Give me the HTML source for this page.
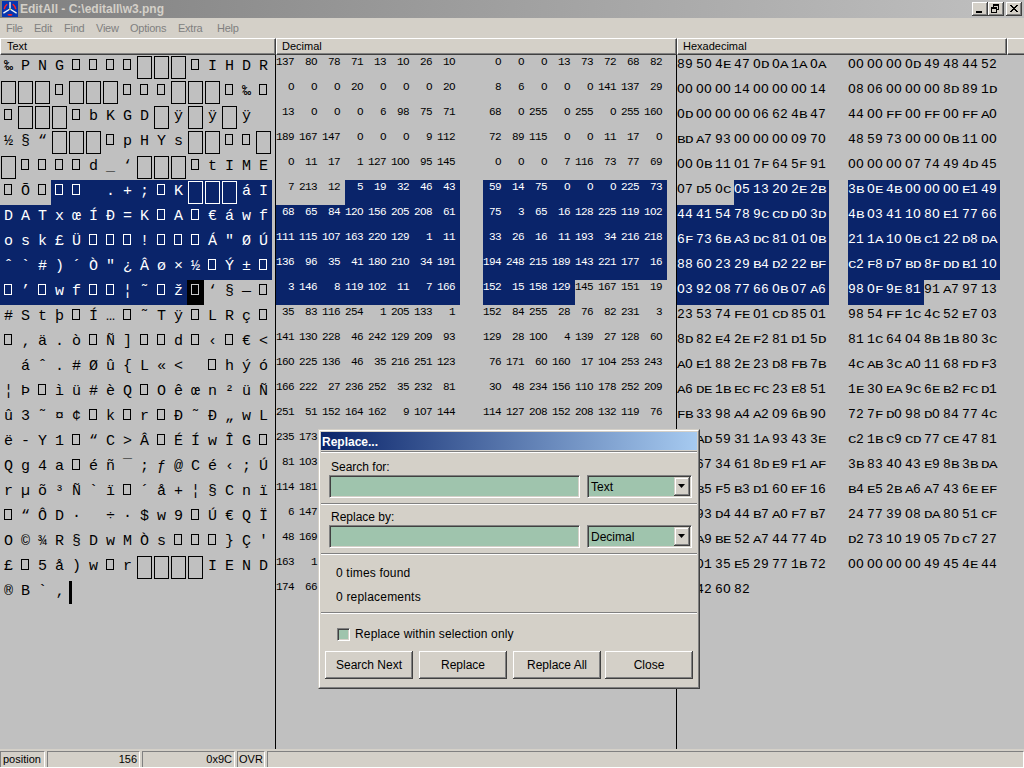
<!DOCTYPE html><html><head><meta charset="utf-8"><style>
*{margin:0;padding:0;box-sizing:border-box}
html,body{width:1024px;height:768px;overflow:hidden;background:#d4d0c8;position:relative;font-family:"Liberation Sans",sans-serif}
div,span{position:absolute}
.tb{left:0;top:0;width:1024px;height:18px;background:linear-gradient(to right,#808080,#c0c0c0)}
.menu{top:18px;height:20px;font-size:11px;letter-spacing:-0.25px;color:#808080;line-height:20px;white-space:pre}
.hdr{top:38px;height:17px;background:#d4d0c8;border-top:1px solid #fff;border-left:1px solid #fff;border-right:1px solid #404040;border-bottom:1px solid #404040;box-shadow:inset -1px -1px 0 #808080;font-size:11px;line-height:15px;padding-left:6px;color:#000}
.panel{top:55px;height:694px;background:#c0c0c0}
.sel{background:#0a246a}
.tc{width:17px;height:25px;font:15px "Liberation Mono",monospace;text-align:center;line-height:23px;color:#000}
.w{color:#fff}
.sb{border:1px solid #000;border-color:#000}
.big{width:15px;height:23px;border:1px solid #000;left:1px;top:1px}
.sm{width:8px;height:11px;border:1px solid #000;left:4px;top:6px}
.dc{width:23px;height:25px;font:11px "Liberation Mono",monospace;letter-spacing:-0.6px;text-align:right;padding-right:5px;line-height:14px;color:#000;white-space:pre}
.hc{width:19px;height:25px;font:13px "Liberation Mono",monospace;line-height:20px;color:#000;white-space:pre;padding-left:0px;letter-spacing:0.2px}
.hc i{font-style:normal;position:relative;font-size:11px;display:inline-block;width:8px;transform:scaleX(1.3);transform-origin:0 0}
.btn{background:#d4d0c8;box-shadow:inset -1px -1px 0 #404040,inset 1px 1px 0 #fff,inset -2px -2px 0 #808080}
.sunk{border:1px solid;border-color:#808080 #fff #fff #808080;box-shadow:inset 1px 1px 0 #404040, inset -1px -1px 0 #d4d0c8;background:#9fc4ad}
.lbl{font-size:12px;color:#000;white-space:pre;line-height:14px}
.groove{height:2px;border-top:1px solid #808080;border-bottom:1px solid #fff}
.stp{top:751px;height:16px;border:1px solid;border-bottom:0;border-color:#808080 #fff #fff #808080;font-size:11px;line-height:14px;padding:0 2px;white-space:pre}
</style></head><body>
<div class="tb"></div>
<div style="left:2px;top:1px;width:16px;height:16px;background:#0636b0"><svg width="16" height="16" style="position:absolute;left:0;top:0">
<path d="M8 1.5V8M8 8L1.8 11.8M8 8L14.2 11.8" stroke="#f4f4f4" stroke-width="1.4" fill="none" stroke-linecap="round"/>
<path d="M4.8 3.6Q2.8 5 2.4 7.6M11.2 3.6Q13.2 5 13.6 7.6" stroke="#ff2020" stroke-width="1.5" fill="none" stroke-linecap="round"/>
<ellipse cx="8" cy="13.8" rx="2.6" ry="0.9" fill="#ff2020"/>
<circle cx="8" cy="8" r="0.9" fill="#b0b020"/></svg></div>
<div style="left:20px;top:2px;font:bold 12px 'Liberation Sans';color:#d4d0c8;line-height:14px;white-space:pre">EditAll - C:\editall\w3.png</div>
<div class="btn" style="left:972px;top:2px;width:16px;height:14px"></div>
<div class="btn" style="left:988px;top:2px;width:16px;height:14px"></div>
<div class="btn" style="left:1006px;top:2px;width:16px;height:14px"></div>
<div style="left:976px;top:11px;width:6px;height:2px;background:#000"></div>
<svg style="position:absolute;left:988px;top:2px" width="16" height="14" shape-rendering="crispEdges"><g fill="#000"><rect x="5" y="2" width="6" height="2"/><rect x="10" y="2" width="1" height="6"/><rect x="9" y="7" width="2" height="1"/><rect x="5" y="2" width="1" height="3"/><rect x="3" y="5" width="6" height="2"/><rect x="3" y="5" width="1" height="6"/><rect x="8" y="5" width="1" height="6"/><rect x="3" y="10" width="6" height="1"/></g></svg>
<svg style="position:absolute;left:1006px;top:2px" width="16" height="14"><path d="M4 3L11 10M11 3L4 10M5 3L12 10M12 3L5 10" stroke="#000" stroke-width="1" fill="none" shape-rendering="crispEdges"/></svg>
<div class="menu" style="left:6px">File</div>
<div class="menu" style="left:34px">Edit</div>
<div class="menu" style="left:64px">Find</div>
<div class="menu" style="left:96px">View</div>
<div class="menu" style="left:130px">Options</div>
<div class="menu" style="left:178px">Extra</div>
<div class="menu" style="left:217px">Help</div>
<div class="hdr" style="left:0;width:276px">Text</div>
<div class="hdr" style="left:276px;width:401px;padding-left:5px">Decimal</div>
<div class="hdr" style="left:677px;width:330px;padding-left:5px">Hexadecimal</div>
<div class="hdr" style="left:1007px;width:20px"></div>
<div class="panel" style="left:0;width:275px"></div>
<div style="left:275px;top:55px;width:1px;height:694px;background:#000"></div>
<div class="panel" style="left:276px;width:400px"></div>
<div style="left:676px;top:55px;width:1px;height:694px;background:#000"></div>
<div class="panel" style="left:677px;width:347px"></div>
<div class="sel" style="left:51px;top:180px;width:221px;height:25px"></div>
<div class="sel" style="left:0px;top:205px;width:272px;height:25px"></div>
<div class="sel" style="left:0px;top:230px;width:272px;height:25px"></div>
<div class="sel" style="left:0px;top:255px;width:272px;height:25px"></div>
<div class="sel" style="left:0px;top:280px;width:187px;height:25px"></div>
<div style="left:187px;top:280px;width:17px;height:25px;background:#000"></div>
<div class="sel" style="left:345px;top:180px;width:115px;height:25px"></div>
<div class="sel" style="left:483px;top:180px;width:184px;height:25px"></div>
<div class="sel" style="left:276px;top:205px;width:184px;height:25px"></div>
<div class="sel" style="left:483px;top:205px;width:184px;height:25px"></div>
<div class="sel" style="left:276px;top:230px;width:184px;height:25px"></div>
<div class="sel" style="left:483px;top:230px;width:184px;height:25px"></div>
<div class="sel" style="left:276px;top:255px;width:184px;height:25px"></div>
<div class="sel" style="left:483px;top:255px;width:184px;height:25px"></div>
<div class="sel" style="left:276px;top:280px;width:184px;height:25px"></div>
<div class="sel" style="left:483px;top:280px;width:92px;height:25px"></div>
<div class="sel" style="left:734px;top:180px;width:95px;height:25px"></div>
<div class="sel" style="left:848px;top:180px;width:152px;height:25px"></div>
<div class="sel" style="left:677px;top:205px;width:152px;height:25px"></div>
<div class="sel" style="left:848px;top:205px;width:152px;height:25px"></div>
<div class="sel" style="left:677px;top:230px;width:152px;height:25px"></div>
<div class="sel" style="left:848px;top:230px;width:152px;height:25px"></div>
<div class="sel" style="left:677px;top:255px;width:152px;height:25px"></div>
<div class="sel" style="left:848px;top:255px;width:152px;height:25px"></div>
<div class="sel" style="left:677px;top:280px;width:152px;height:25px"></div>
<div class="sel" style="left:848px;top:280px;width:76px;height:25px"></div>
<div class="tc" style="left:0px;top:55px;color:#000">‰</div>
<div class="dc" style="left:276px;top:55px;color:#000">137</div>
<div class="hc" style="left:677px;top:55px;color:#000">89</div>
<div class="tc" style="left:17px;top:55px;color:#000">P</div>
<div class="dc" style="left:299px;top:55px;color:#000">8O</div>
<div class="hc" style="left:696px;top:55px;color:#000">5O</div>
<div class="tc" style="left:34px;top:55px;color:#000">N</div>
<div class="dc" style="left:322px;top:55px;color:#000">78</div>
<div class="hc" style="left:715px;top:55px;color:#000">4<i>E</i></div>
<div class="tc" style="left:51px;top:55px;color:#000">G</div>
<div class="dc" style="left:345px;top:55px;color:#000">71</div>
<div class="hc" style="left:734px;top:55px;color:#000">47</div>
<div class="sm" style="left:72px;top:59px;border-color:#000"></div>
<div class="dc" style="left:368px;top:55px;color:#000">13</div>
<div class="hc" style="left:753px;top:55px;color:#000">O<i>D</i></div>
<div class="sm" style="left:89px;top:59px;border-color:#000"></div>
<div class="dc" style="left:391px;top:55px;color:#000">1O</div>
<div class="hc" style="left:772px;top:55px;color:#000">O<i>A</i></div>
<div class="sm" style="left:106px;top:59px;border-color:#000"></div>
<div class="dc" style="left:414px;top:55px;color:#000">26</div>
<div class="hc" style="left:791px;top:55px;color:#000">1<i>A</i></div>
<div class="sm" style="left:123px;top:59px;border-color:#000"></div>
<div class="dc" style="left:437px;top:55px;color:#000">1O</div>
<div class="hc" style="left:810px;top:55px;color:#000">O<i>A</i></div>
<div class="big" style="left:137px;top:56px;border-color:#000"></div>
<div class="dc" style="left:483px;top:55px;color:#000">O</div>
<div class="hc" style="left:848px;top:55px;color:#000">OO</div>
<div class="big" style="left:154px;top:56px;border-color:#000"></div>
<div class="dc" style="left:506px;top:55px;color:#000">O</div>
<div class="hc" style="left:867px;top:55px;color:#000">OO</div>
<div class="big" style="left:171px;top:56px;border-color:#000"></div>
<div class="dc" style="left:529px;top:55px;color:#000">O</div>
<div class="hc" style="left:886px;top:55px;color:#000">OO</div>
<div class="sm" style="left:191px;top:59px;border-color:#000"></div>
<div class="dc" style="left:552px;top:55px;color:#000">13</div>
<div class="hc" style="left:905px;top:55px;color:#000">O<i>D</i></div>
<div class="tc" style="left:204px;top:55px;color:#000">I</div>
<div class="dc" style="left:575px;top:55px;color:#000">73</div>
<div class="hc" style="left:924px;top:55px;color:#000">49</div>
<div class="tc" style="left:221px;top:55px;color:#000">H</div>
<div class="dc" style="left:598px;top:55px;color:#000">72</div>
<div class="hc" style="left:943px;top:55px;color:#000">48</div>
<div class="tc" style="left:238px;top:55px;color:#000">D</div>
<div class="dc" style="left:621px;top:55px;color:#000">68</div>
<div class="hc" style="left:962px;top:55px;color:#000">44</div>
<div class="tc" style="left:255px;top:55px;color:#000">R</div>
<div class="dc" style="left:644px;top:55px;color:#000">82</div>
<div class="hc" style="left:981px;top:55px;color:#000">52</div>
<div class="big" style="left:1px;top:81px;border-color:#000"></div>
<div class="dc" style="left:276px;top:80px;color:#000">O</div>
<div class="hc" style="left:677px;top:80px;color:#000">OO</div>
<div class="big" style="left:18px;top:81px;border-color:#000"></div>
<div class="dc" style="left:299px;top:80px;color:#000">O</div>
<div class="hc" style="left:696px;top:80px;color:#000">OO</div>
<div class="big" style="left:35px;top:81px;border-color:#000"></div>
<div class="dc" style="left:322px;top:80px;color:#000">O</div>
<div class="hc" style="left:715px;top:80px;color:#000">OO</div>
<div class="sm" style="left:55px;top:84px;border-color:#000"></div>
<div class="dc" style="left:345px;top:80px;color:#000">2O</div>
<div class="hc" style="left:734px;top:80px;color:#000">14</div>
<div class="big" style="left:69px;top:81px;border-color:#000"></div>
<div class="dc" style="left:368px;top:80px;color:#000">O</div>
<div class="hc" style="left:753px;top:80px;color:#000">OO</div>
<div class="big" style="left:86px;top:81px;border-color:#000"></div>
<div class="dc" style="left:391px;top:80px;color:#000">O</div>
<div class="hc" style="left:772px;top:80px;color:#000">OO</div>
<div class="big" style="left:103px;top:81px;border-color:#000"></div>
<div class="dc" style="left:414px;top:80px;color:#000">O</div>
<div class="hc" style="left:791px;top:80px;color:#000">OO</div>
<div class="sm" style="left:123px;top:84px;border-color:#000"></div>
<div class="dc" style="left:437px;top:80px;color:#000">2O</div>
<div class="hc" style="left:810px;top:80px;color:#000">14</div>
<div class="sm" style="left:140px;top:84px;border-color:#000"></div>
<div class="dc" style="left:483px;top:80px;color:#000">8</div>
<div class="hc" style="left:848px;top:80px;color:#000">O8</div>
<div class="sm" style="left:157px;top:84px;border-color:#000"></div>
<div class="dc" style="left:506px;top:80px;color:#000">6</div>
<div class="hc" style="left:867px;top:80px;color:#000">O6</div>
<div class="big" style="left:171px;top:81px;border-color:#000"></div>
<div class="dc" style="left:529px;top:80px;color:#000">O</div>
<div class="hc" style="left:886px;top:80px;color:#000">OO</div>
<div class="big" style="left:188px;top:81px;border-color:#000"></div>
<div class="dc" style="left:552px;top:80px;color:#000">O</div>
<div class="hc" style="left:905px;top:80px;color:#000">OO</div>
<div class="big" style="left:205px;top:81px;border-color:#000"></div>
<div class="dc" style="left:575px;top:80px;color:#000">O</div>
<div class="hc" style="left:924px;top:80px;color:#000">OO</div>
<div class="sm" style="left:225px;top:84px;border-color:#000"></div>
<div class="dc" style="left:598px;top:80px;color:#000">141</div>
<div class="hc" style="left:943px;top:80px;color:#000">8<i>D</i></div>
<div class="tc" style="left:238px;top:80px;color:#000">‰</div>
<div class="dc" style="left:621px;top:80px;color:#000">137</div>
<div class="hc" style="left:962px;top:80px;color:#000">89</div>
<div class="sm" style="left:259px;top:84px;border-color:#000"></div>
<div class="dc" style="left:644px;top:80px;color:#000">29</div>
<div class="hc" style="left:981px;top:80px;color:#000">1<i>D</i></div>
<div class="sm" style="left:4px;top:109px;border-color:#000"></div>
<div class="dc" style="left:276px;top:105px;color:#000">13</div>
<div class="hc" style="left:677px;top:105px;color:#000">O<i>D</i></div>
<div class="big" style="left:18px;top:106px;border-color:#000"></div>
<div class="dc" style="left:299px;top:105px;color:#000">O</div>
<div class="hc" style="left:696px;top:105px;color:#000">OO</div>
<div class="big" style="left:35px;top:106px;border-color:#000"></div>
<div class="dc" style="left:322px;top:105px;color:#000">O</div>
<div class="hc" style="left:715px;top:105px;color:#000">OO</div>
<div class="big" style="left:52px;top:106px;border-color:#000"></div>
<div class="dc" style="left:345px;top:105px;color:#000">O</div>
<div class="hc" style="left:734px;top:105px;color:#000">OO</div>
<div class="sm" style="left:72px;top:109px;border-color:#000"></div>
<div class="dc" style="left:368px;top:105px;color:#000">6</div>
<div class="hc" style="left:753px;top:105px;color:#000">O6</div>
<div class="tc" style="left:85px;top:105px;color:#000">b</div>
<div class="dc" style="left:391px;top:105px;color:#000">98</div>
<div class="hc" style="left:772px;top:105px;color:#000">62</div>
<div class="tc" style="left:102px;top:105px;color:#000">K</div>
<div class="dc" style="left:414px;top:105px;color:#000">75</div>
<div class="hc" style="left:791px;top:105px;color:#000">4<i>B</i></div>
<div class="tc" style="left:119px;top:105px;color:#000">G</div>
<div class="dc" style="left:437px;top:105px;color:#000">71</div>
<div class="hc" style="left:810px;top:105px;color:#000">47</div>
<div class="tc" style="left:136px;top:105px;color:#000">D</div>
<div class="dc" style="left:483px;top:105px;color:#000">68</div>
<div class="hc" style="left:848px;top:105px;color:#000">44</div>
<div class="big" style="left:154px;top:106px;border-color:#000"></div>
<div class="dc" style="left:506px;top:105px;color:#000">O</div>
<div class="hc" style="left:867px;top:105px;color:#000">OO</div>
<div class="tc" style="left:170px;top:105px;color:#000">ÿ</div>
<div class="dc" style="left:529px;top:105px;color:#000">255</div>
<div class="hc" style="left:886px;top:105px;color:#000"><i>F</i><i>F</i></div>
<div class="big" style="left:188px;top:106px;border-color:#000"></div>
<div class="dc" style="left:552px;top:105px;color:#000">O</div>
<div class="hc" style="left:905px;top:105px;color:#000">OO</div>
<div class="tc" style="left:204px;top:105px;color:#000">ÿ</div>
<div class="dc" style="left:575px;top:105px;color:#000">255</div>
<div class="hc" style="left:924px;top:105px;color:#000"><i>F</i><i>F</i></div>
<div class="big" style="left:222px;top:106px;border-color:#000"></div>
<div class="dc" style="left:598px;top:105px;color:#000">O</div>
<div class="hc" style="left:943px;top:105px;color:#000">OO</div>
<div class="tc" style="left:238px;top:105px;color:#000">ÿ</div>
<div class="dc" style="left:621px;top:105px;color:#000">255</div>
<div class="hc" style="left:962px;top:105px;color:#000"><i>F</i><i>F</i></div>
<div class="dc" style="left:644px;top:105px;color:#000">16O</div>
<div class="hc" style="left:981px;top:105px;color:#000"><i>A</i>O</div>
<div class="tc" style="left:0px;top:130px;color:#000">½</div>
<div class="dc" style="left:276px;top:130px;color:#000">189</div>
<div class="hc" style="left:677px;top:130px;color:#000"><i>B</i><i>D</i></div>
<div class="tc" style="left:17px;top:130px;color:#000">§</div>
<div class="dc" style="left:299px;top:130px;color:#000">167</div>
<div class="hc" style="left:696px;top:130px;color:#000"><i>A</i>7</div>
<div class="tc" style="left:34px;top:130px;color:#000">“</div>
<div class="dc" style="left:322px;top:130px;color:#000">147</div>
<div class="hc" style="left:715px;top:130px;color:#000">93</div>
<div class="big" style="left:52px;top:131px;border-color:#000"></div>
<div class="dc" style="left:345px;top:130px;color:#000">O</div>
<div class="hc" style="left:734px;top:130px;color:#000">OO</div>
<div class="big" style="left:69px;top:131px;border-color:#000"></div>
<div class="dc" style="left:368px;top:130px;color:#000">O</div>
<div class="hc" style="left:753px;top:130px;color:#000">OO</div>
<div class="big" style="left:86px;top:131px;border-color:#000"></div>
<div class="dc" style="left:391px;top:130px;color:#000">O</div>
<div class="hc" style="left:772px;top:130px;color:#000">OO</div>
<div class="sm" style="left:106px;top:134px;border-color:#000"></div>
<div class="dc" style="left:414px;top:130px;color:#000">9</div>
<div class="hc" style="left:791px;top:130px;color:#000">O9</div>
<div class="tc" style="left:119px;top:130px;color:#000">p</div>
<div class="dc" style="left:437px;top:130px;color:#000">112</div>
<div class="hc" style="left:810px;top:130px;color:#000">7O</div>
<div class="tc" style="left:136px;top:130px;color:#000">H</div>
<div class="dc" style="left:483px;top:130px;color:#000">72</div>
<div class="hc" style="left:848px;top:130px;color:#000">48</div>
<div class="tc" style="left:153px;top:130px;color:#000">Y</div>
<div class="dc" style="left:506px;top:130px;color:#000">89</div>
<div class="hc" style="left:867px;top:130px;color:#000">59</div>
<div class="tc" style="left:170px;top:130px;color:#000">s</div>
<div class="dc" style="left:529px;top:130px;color:#000">115</div>
<div class="hc" style="left:886px;top:130px;color:#000">73</div>
<div class="big" style="left:188px;top:131px;border-color:#000"></div>
<div class="dc" style="left:552px;top:130px;color:#000">O</div>
<div class="hc" style="left:905px;top:130px;color:#000">OO</div>
<div class="big" style="left:205px;top:131px;border-color:#000"></div>
<div class="dc" style="left:575px;top:130px;color:#000">O</div>
<div class="hc" style="left:924px;top:130px;color:#000">OO</div>
<div class="sm" style="left:225px;top:134px;border-color:#000"></div>
<div class="dc" style="left:598px;top:130px;color:#000">11</div>
<div class="hc" style="left:943px;top:130px;color:#000">O<i>B</i></div>
<div class="sm" style="left:242px;top:134px;border-color:#000"></div>
<div class="dc" style="left:621px;top:130px;color:#000">17</div>
<div class="hc" style="left:962px;top:130px;color:#000">11</div>
<div class="big" style="left:256px;top:131px;border-color:#000"></div>
<div class="dc" style="left:644px;top:130px;color:#000">O</div>
<div class="hc" style="left:981px;top:130px;color:#000">OO</div>
<div class="big" style="left:1px;top:156px;border-color:#000"></div>
<div class="dc" style="left:276px;top:155px;color:#000">O</div>
<div class="hc" style="left:677px;top:155px;color:#000">OO</div>
<div class="sm" style="left:21px;top:159px;border-color:#000"></div>
<div class="dc" style="left:299px;top:155px;color:#000">11</div>
<div class="hc" style="left:696px;top:155px;color:#000">O<i>B</i></div>
<div class="sm" style="left:38px;top:159px;border-color:#000"></div>
<div class="dc" style="left:322px;top:155px;color:#000">17</div>
<div class="hc" style="left:715px;top:155px;color:#000">11</div>
<div class="sm" style="left:55px;top:159px;border-color:#000"></div>
<div class="dc" style="left:345px;top:155px;color:#000">1</div>
<div class="hc" style="left:734px;top:155px;color:#000">O1</div>
<div class="sm" style="left:72px;top:159px;border-color:#000"></div>
<div class="dc" style="left:368px;top:155px;color:#000">127</div>
<div class="hc" style="left:753px;top:155px;color:#000">7<i>F</i></div>
<div class="tc" style="left:85px;top:155px;color:#000">d</div>
<div class="dc" style="left:391px;top:155px;color:#000">1OO</div>
<div class="hc" style="left:772px;top:155px;color:#000">64</div>
<div class="tc" style="left:102px;top:155px;color:#000">_</div>
<div class="dc" style="left:414px;top:155px;color:#000">95</div>
<div class="hc" style="left:791px;top:155px;color:#000">5<i>F</i></div>
<div class="tc" style="left:119px;top:155px;color:#000">‘</div>
<div class="dc" style="left:437px;top:155px;color:#000">145</div>
<div class="hc" style="left:810px;top:155px;color:#000">91</div>
<div class="big" style="left:137px;top:156px;border-color:#000"></div>
<div class="dc" style="left:483px;top:155px;color:#000">O</div>
<div class="hc" style="left:848px;top:155px;color:#000">OO</div>
<div class="big" style="left:154px;top:156px;border-color:#000"></div>
<div class="dc" style="left:506px;top:155px;color:#000">O</div>
<div class="hc" style="left:867px;top:155px;color:#000">OO</div>
<div class="big" style="left:171px;top:156px;border-color:#000"></div>
<div class="dc" style="left:529px;top:155px;color:#000">O</div>
<div class="hc" style="left:886px;top:155px;color:#000">OO</div>
<div class="sm" style="left:191px;top:159px;border-color:#000"></div>
<div class="dc" style="left:552px;top:155px;color:#000">7</div>
<div class="hc" style="left:905px;top:155px;color:#000">O7</div>
<div class="tc" style="left:204px;top:155px;color:#000">t</div>
<div class="dc" style="left:575px;top:155px;color:#000">116</div>
<div class="hc" style="left:924px;top:155px;color:#000">74</div>
<div class="tc" style="left:221px;top:155px;color:#000">I</div>
<div class="dc" style="left:598px;top:155px;color:#000">73</div>
<div class="hc" style="left:943px;top:155px;color:#000">49</div>
<div class="tc" style="left:238px;top:155px;color:#000">M</div>
<div class="dc" style="left:621px;top:155px;color:#000">77</div>
<div class="hc" style="left:962px;top:155px;color:#000">4<i>D</i></div>
<div class="tc" style="left:255px;top:155px;color:#000">E</div>
<div class="dc" style="left:644px;top:155px;color:#000">69</div>
<div class="hc" style="left:981px;top:155px;color:#000">45</div>
<div class="sm" style="left:4px;top:184px;border-color:#000"></div>
<div class="dc" style="left:276px;top:180px;color:#000">7</div>
<div class="hc" style="left:677px;top:180px;color:#000">O7</div>
<div class="tc" style="left:17px;top:180px;color:#000">Õ</div>
<div class="dc" style="left:299px;top:180px;color:#000">213</div>
<div class="hc" style="left:696px;top:180px;color:#000"><i>D</i>5</div>
<div class="sm" style="left:38px;top:184px;border-color:#000"></div>
<div class="dc" style="left:322px;top:180px;color:#000">12</div>
<div class="hc" style="left:715px;top:180px;color:#000">O<i>C</i></div>
<div class="sm" style="left:55px;top:184px;border-color:#fff"></div>
<div class="dc" style="left:345px;top:180px;color:#fff">5</div>
<div class="hc" style="left:734px;top:180px;color:#fff">O5</div>
<div class="sm" style="left:72px;top:184px;border-color:#fff"></div>
<div class="dc" style="left:368px;top:180px;color:#fff">19</div>
<div class="hc" style="left:753px;top:180px;color:#fff">13</div>
<div class="tc" style="left:85px;top:180px;color:#fff"> </div>
<div class="dc" style="left:391px;top:180px;color:#fff">32</div>
<div class="hc" style="left:772px;top:180px;color:#fff">2O</div>
<div class="tc" style="left:102px;top:180px;color:#fff">.</div>
<div class="dc" style="left:414px;top:180px;color:#fff">46</div>
<div class="hc" style="left:791px;top:180px;color:#fff">2<i>E</i></div>
<div class="tc" style="left:119px;top:180px;color:#fff">+</div>
<div class="dc" style="left:437px;top:180px;color:#fff">43</div>
<div class="hc" style="left:810px;top:180px;color:#fff">2<i>B</i></div>
<div class="tc" style="left:136px;top:180px;color:#fff">;</div>
<div class="dc" style="left:483px;top:180px;color:#fff">59</div>
<div class="hc" style="left:848px;top:180px;color:#fff">3<i>B</i></div>
<div class="sm" style="left:157px;top:184px;border-color:#fff"></div>
<div class="dc" style="left:506px;top:180px;color:#fff">14</div>
<div class="hc" style="left:867px;top:180px;color:#fff">O<i>E</i></div>
<div class="tc" style="left:170px;top:180px;color:#fff">K</div>
<div class="dc" style="left:529px;top:180px;color:#fff">75</div>
<div class="hc" style="left:886px;top:180px;color:#fff">4<i>B</i></div>
<div class="big" style="left:188px;top:181px;border-color:#fff"></div>
<div class="dc" style="left:552px;top:180px;color:#fff">O</div>
<div class="hc" style="left:905px;top:180px;color:#fff">OO</div>
<div class="big" style="left:205px;top:181px;border-color:#fff"></div>
<div class="dc" style="left:575px;top:180px;color:#fff">O</div>
<div class="hc" style="left:924px;top:180px;color:#fff">OO</div>
<div class="big" style="left:222px;top:181px;border-color:#fff"></div>
<div class="dc" style="left:598px;top:180px;color:#fff">O</div>
<div class="hc" style="left:943px;top:180px;color:#fff">OO</div>
<div class="tc" style="left:238px;top:180px;color:#fff">á</div>
<div class="dc" style="left:621px;top:180px;color:#fff">225</div>
<div class="hc" style="left:962px;top:180px;color:#fff"><i>E</i>1</div>
<div class="tc" style="left:255px;top:180px;color:#fff">I</div>
<div class="dc" style="left:644px;top:180px;color:#fff">73</div>
<div class="hc" style="left:981px;top:180px;color:#fff">49</div>
<div class="tc" style="left:0px;top:205px;color:#fff">D</div>
<div class="dc" style="left:276px;top:205px;color:#fff">68</div>
<div class="hc" style="left:677px;top:205px;color:#fff">44</div>
<div class="tc" style="left:17px;top:205px;color:#fff">A</div>
<div class="dc" style="left:299px;top:205px;color:#fff">65</div>
<div class="hc" style="left:696px;top:205px;color:#fff">41</div>
<div class="tc" style="left:34px;top:205px;color:#fff">T</div>
<div class="dc" style="left:322px;top:205px;color:#fff">84</div>
<div class="hc" style="left:715px;top:205px;color:#fff">54</div>
<div class="tc" style="left:51px;top:205px;color:#fff">x</div>
<div class="dc" style="left:345px;top:205px;color:#fff">12O</div>
<div class="hc" style="left:734px;top:205px;color:#fff">78</div>
<div class="tc" style="left:68px;top:205px;color:#fff">œ</div>
<div class="dc" style="left:368px;top:205px;color:#fff">156</div>
<div class="hc" style="left:753px;top:205px;color:#fff">9<i>C</i></div>
<div class="tc" style="left:85px;top:205px;color:#fff">Í</div>
<div class="dc" style="left:391px;top:205px;color:#fff">2O5</div>
<div class="hc" style="left:772px;top:205px;color:#fff"><i>C</i><i>D</i></div>
<div class="tc" style="left:102px;top:205px;color:#fff">Ð</div>
<div class="dc" style="left:414px;top:205px;color:#fff">2O8</div>
<div class="hc" style="left:791px;top:205px;color:#fff"><i>D</i>O</div>
<div class="tc" style="left:119px;top:205px;color:#fff">=</div>
<div class="dc" style="left:437px;top:205px;color:#fff">61</div>
<div class="hc" style="left:810px;top:205px;color:#fff">3<i>D</i></div>
<div class="tc" style="left:136px;top:205px;color:#fff">K</div>
<div class="dc" style="left:483px;top:205px;color:#fff">75</div>
<div class="hc" style="left:848px;top:205px;color:#fff">4<i>B</i></div>
<div class="sm" style="left:157px;top:209px;border-color:#fff"></div>
<div class="dc" style="left:506px;top:205px;color:#fff">3</div>
<div class="hc" style="left:867px;top:205px;color:#fff">O3</div>
<div class="tc" style="left:170px;top:205px;color:#fff">A</div>
<div class="dc" style="left:529px;top:205px;color:#fff">65</div>
<div class="hc" style="left:886px;top:205px;color:#fff">41</div>
<div class="sm" style="left:191px;top:209px;border-color:#fff"></div>
<div class="dc" style="left:552px;top:205px;color:#fff">16</div>
<div class="hc" style="left:905px;top:205px;color:#fff">1O</div>
<div class="tc" style="left:204px;top:205px;color:#fff">€</div>
<div class="dc" style="left:575px;top:205px;color:#fff">128</div>
<div class="hc" style="left:924px;top:205px;color:#fff">8O</div>
<div class="tc" style="left:221px;top:205px;color:#fff">á</div>
<div class="dc" style="left:598px;top:205px;color:#fff">225</div>
<div class="hc" style="left:943px;top:205px;color:#fff"><i>E</i>1</div>
<div class="tc" style="left:238px;top:205px;color:#fff">w</div>
<div class="dc" style="left:621px;top:205px;color:#fff">119</div>
<div class="hc" style="left:962px;top:205px;color:#fff">77</div>
<div class="tc" style="left:255px;top:205px;color:#fff">f</div>
<div class="dc" style="left:644px;top:205px;color:#fff">1O2</div>
<div class="hc" style="left:981px;top:205px;color:#fff">66</div>
<div class="tc" style="left:0px;top:230px;color:#fff">o</div>
<div class="dc" style="left:276px;top:230px;color:#fff">111</div>
<div class="hc" style="left:677px;top:230px;color:#fff">6<i>F</i></div>
<div class="tc" style="left:17px;top:230px;color:#fff">s</div>
<div class="dc" style="left:299px;top:230px;color:#fff">115</div>
<div class="hc" style="left:696px;top:230px;color:#fff">73</div>
<div class="tc" style="left:34px;top:230px;color:#fff">k</div>
<div class="dc" style="left:322px;top:230px;color:#fff">1O7</div>
<div class="hc" style="left:715px;top:230px;color:#fff">6<i>B</i></div>
<div class="tc" style="left:51px;top:230px;color:#fff">£</div>
<div class="dc" style="left:345px;top:230px;color:#fff">163</div>
<div class="hc" style="left:734px;top:230px;color:#fff"><i>A</i>3</div>
<div class="tc" style="left:68px;top:230px;color:#fff">Ü</div>
<div class="dc" style="left:368px;top:230px;color:#fff">22O</div>
<div class="hc" style="left:753px;top:230px;color:#fff"><i>D</i><i>C</i></div>
<div class="sm" style="left:89px;top:234px;border-color:#fff"></div>
<div class="dc" style="left:391px;top:230px;color:#fff">129</div>
<div class="hc" style="left:772px;top:230px;color:#fff">81</div>
<div class="sm" style="left:106px;top:234px;border-color:#fff"></div>
<div class="dc" style="left:414px;top:230px;color:#fff">1</div>
<div class="hc" style="left:791px;top:230px;color:#fff">O1</div>
<div class="sm" style="left:123px;top:234px;border-color:#fff"></div>
<div class="dc" style="left:437px;top:230px;color:#fff">11</div>
<div class="hc" style="left:810px;top:230px;color:#fff">O<i>B</i></div>
<div class="tc" style="left:136px;top:230px;color:#fff">!</div>
<div class="dc" style="left:483px;top:230px;color:#fff">33</div>
<div class="hc" style="left:848px;top:230px;color:#fff">21</div>
<div class="sm" style="left:157px;top:234px;border-color:#fff"></div>
<div class="dc" style="left:506px;top:230px;color:#fff">26</div>
<div class="hc" style="left:867px;top:230px;color:#fff">1<i>A</i></div>
<div class="sm" style="left:174px;top:234px;border-color:#fff"></div>
<div class="dc" style="left:529px;top:230px;color:#fff">16</div>
<div class="hc" style="left:886px;top:230px;color:#fff">1O</div>
<div class="sm" style="left:191px;top:234px;border-color:#fff"></div>
<div class="dc" style="left:552px;top:230px;color:#fff">11</div>
<div class="hc" style="left:905px;top:230px;color:#fff">O<i>B</i></div>
<div class="tc" style="left:204px;top:230px;color:#fff">Á</div>
<div class="dc" style="left:575px;top:230px;color:#fff">193</div>
<div class="hc" style="left:924px;top:230px;color:#fff"><i>C</i>1</div>
<div class="tc" style="left:221px;top:230px;color:#fff">&quot;</div>
<div class="dc" style="left:598px;top:230px;color:#fff">34</div>
<div class="hc" style="left:943px;top:230px;color:#fff">22</div>
<div class="tc" style="left:238px;top:230px;color:#fff">Ø</div>
<div class="dc" style="left:621px;top:230px;color:#fff">216</div>
<div class="hc" style="left:962px;top:230px;color:#fff"><i>D</i>8</div>
<div class="tc" style="left:255px;top:230px;color:#fff">Ú</div>
<div class="dc" style="left:644px;top:230px;color:#fff">218</div>
<div class="hc" style="left:981px;top:230px;color:#fff"><i>D</i><i>A</i></div>
<div class="tc" style="left:0px;top:255px;color:#fff">ˆ</div>
<div class="dc" style="left:276px;top:255px;color:#fff">136</div>
<div class="hc" style="left:677px;top:255px;color:#fff">88</div>
<div class="tc" style="left:17px;top:255px;color:#fff">`</div>
<div class="dc" style="left:299px;top:255px;color:#fff">96</div>
<div class="hc" style="left:696px;top:255px;color:#fff">6O</div>
<div class="tc" style="left:34px;top:255px;color:#fff">#</div>
<div class="dc" style="left:322px;top:255px;color:#fff">35</div>
<div class="hc" style="left:715px;top:255px;color:#fff">23</div>
<div class="tc" style="left:51px;top:255px;color:#fff">)</div>
<div class="dc" style="left:345px;top:255px;color:#fff">41</div>
<div class="hc" style="left:734px;top:255px;color:#fff">29</div>
<div class="tc" style="left:68px;top:255px;color:#fff">´</div>
<div class="dc" style="left:368px;top:255px;color:#fff">18O</div>
<div class="hc" style="left:753px;top:255px;color:#fff"><i>B</i>4</div>
<div class="tc" style="left:85px;top:255px;color:#fff">Ò</div>
<div class="dc" style="left:391px;top:255px;color:#fff">21O</div>
<div class="hc" style="left:772px;top:255px;color:#fff"><i>D</i>2</div>
<div class="tc" style="left:102px;top:255px;color:#fff">&quot;</div>
<div class="dc" style="left:414px;top:255px;color:#fff">34</div>
<div class="hc" style="left:791px;top:255px;color:#fff">22</div>
<div class="tc" style="left:119px;top:255px;color:#fff">¿</div>
<div class="dc" style="left:437px;top:255px;color:#fff">191</div>
<div class="hc" style="left:810px;top:255px;color:#fff"><i>B</i><i>F</i></div>
<div class="tc" style="left:136px;top:255px;color:#fff">Â</div>
<div class="dc" style="left:483px;top:255px;color:#fff">194</div>
<div class="hc" style="left:848px;top:255px;color:#fff"><i>C</i>2</div>
<div class="tc" style="left:153px;top:255px;color:#fff">ø</div>
<div class="dc" style="left:506px;top:255px;color:#fff">248</div>
<div class="hc" style="left:867px;top:255px;color:#fff"><i>F</i>8</div>
<div class="tc" style="left:170px;top:255px;color:#fff">×</div>
<div class="dc" style="left:529px;top:255px;color:#fff">215</div>
<div class="hc" style="left:886px;top:255px;color:#fff"><i>D</i>7</div>
<div class="tc" style="left:187px;top:255px;color:#fff">½</div>
<div class="dc" style="left:552px;top:255px;color:#fff">189</div>
<div class="hc" style="left:905px;top:255px;color:#fff"><i>B</i><i>D</i></div>
<div class="sm" style="left:208px;top:259px;border-color:#fff"></div>
<div class="dc" style="left:575px;top:255px;color:#fff">143</div>
<div class="hc" style="left:924px;top:255px;color:#fff">8<i>F</i></div>
<div class="tc" style="left:221px;top:255px;color:#fff">Ý</div>
<div class="dc" style="left:598px;top:255px;color:#fff">221</div>
<div class="hc" style="left:943px;top:255px;color:#fff"><i>D</i><i>D</i></div>
<div class="tc" style="left:238px;top:255px;color:#fff">±</div>
<div class="dc" style="left:621px;top:255px;color:#fff">177</div>
<div class="hc" style="left:962px;top:255px;color:#fff"><i>B</i>1</div>
<div class="sm" style="left:259px;top:259px;border-color:#fff"></div>
<div class="dc" style="left:644px;top:255px;color:#fff">16</div>
<div class="hc" style="left:981px;top:255px;color:#fff">1O</div>
<div class="sm" style="left:4px;top:284px;border-color:#fff"></div>
<div class="dc" style="left:276px;top:280px;color:#fff">3</div>
<div class="hc" style="left:677px;top:280px;color:#fff">O3</div>
<div class="tc" style="left:17px;top:280px;color:#fff">’</div>
<div class="dc" style="left:299px;top:280px;color:#fff">146</div>
<div class="hc" style="left:696px;top:280px;color:#fff">92</div>
<div class="sm" style="left:38px;top:284px;border-color:#fff"></div>
<div class="dc" style="left:322px;top:280px;color:#fff">8</div>
<div class="hc" style="left:715px;top:280px;color:#fff">O8</div>
<div class="tc" style="left:51px;top:280px;color:#fff">w</div>
<div class="dc" style="left:345px;top:280px;color:#fff">119</div>
<div class="hc" style="left:734px;top:280px;color:#fff">77</div>
<div class="tc" style="left:68px;top:280px;color:#fff">f</div>
<div class="dc" style="left:368px;top:280px;color:#fff">1O2</div>
<div class="hc" style="left:753px;top:280px;color:#fff">66</div>
<div class="sm" style="left:89px;top:284px;border-color:#fff"></div>
<div class="dc" style="left:391px;top:280px;color:#fff">11</div>
<div class="hc" style="left:772px;top:280px;color:#fff">O<i>B</i></div>
<div class="sm" style="left:106px;top:284px;border-color:#fff"></div>
<div class="dc" style="left:414px;top:280px;color:#fff">7</div>
<div class="hc" style="left:791px;top:280px;color:#fff">O7</div>
<div class="tc" style="left:119px;top:280px;color:#fff">¦</div>
<div class="dc" style="left:437px;top:280px;color:#fff">166</div>
<div class="hc" style="left:810px;top:280px;color:#fff"><i>A</i>6</div>
<div class="tc" style="left:136px;top:280px;color:#fff">˜</div>
<div class="dc" style="left:483px;top:280px;color:#fff">152</div>
<div class="hc" style="left:848px;top:280px;color:#fff">98</div>
<div class="sm" style="left:157px;top:284px;border-color:#fff"></div>
<div class="dc" style="left:506px;top:280px;color:#fff">15</div>
<div class="hc" style="left:867px;top:280px;color:#fff">O<i>F</i></div>
<div class="tc" style="left:170px;top:280px;color:#fff">ž</div>
<div class="dc" style="left:529px;top:280px;color:#fff">158</div>
<div class="hc" style="left:886px;top:280px;color:#fff">9<i>E</i></div>
<div class="sm" style="left:191px;top:284px;border-color:#c8c8c8"></div>
<div class="dc" style="left:552px;top:280px;color:#fff">129</div>
<div class="hc" style="left:905px;top:280px;color:#fff">81</div>
<div class="tc" style="left:204px;top:280px;color:#000">‘</div>
<div class="dc" style="left:575px;top:280px;color:#000">145</div>
<div class="hc" style="left:924px;top:280px;color:#000">91</div>
<div class="tc" style="left:221px;top:280px;color:#000">§</div>
<div class="dc" style="left:598px;top:280px;color:#000">167</div>
<div class="hc" style="left:943px;top:280px;color:#000"><i>A</i>7</div>
<div class="tc" style="left:238px;top:280px;color:#000">—</div>
<div class="dc" style="left:621px;top:280px;color:#000">151</div>
<div class="hc" style="left:962px;top:280px;color:#000">97</div>
<div class="sm" style="left:259px;top:284px;border-color:#000"></div>
<div class="dc" style="left:644px;top:280px;color:#000">19</div>
<div class="hc" style="left:981px;top:280px;color:#000">13</div>
<div class="tc" style="left:0px;top:305px;color:#000">#</div>
<div class="dc" style="left:276px;top:305px;color:#000">35</div>
<div class="hc" style="left:677px;top:305px;color:#000">23</div>
<div class="tc" style="left:17px;top:305px;color:#000">S</div>
<div class="dc" style="left:299px;top:305px;color:#000">83</div>
<div class="hc" style="left:696px;top:305px;color:#000">53</div>
<div class="tc" style="left:34px;top:305px;color:#000">t</div>
<div class="dc" style="left:322px;top:305px;color:#000">116</div>
<div class="hc" style="left:715px;top:305px;color:#000">74</div>
<div class="tc" style="left:51px;top:305px;color:#000">þ</div>
<div class="dc" style="left:345px;top:305px;color:#000">254</div>
<div class="hc" style="left:734px;top:305px;color:#000"><i>F</i><i>E</i></div>
<div class="sm" style="left:72px;top:309px;border-color:#000"></div>
<div class="dc" style="left:368px;top:305px;color:#000">1</div>
<div class="hc" style="left:753px;top:305px;color:#000">O1</div>
<div class="tc" style="left:85px;top:305px;color:#000">Í</div>
<div class="dc" style="left:391px;top:305px;color:#000">2O5</div>
<div class="hc" style="left:772px;top:305px;color:#000"><i>C</i><i>D</i></div>
<div class="tc" style="left:102px;top:305px;color:#000">…</div>
<div class="dc" style="left:414px;top:305px;color:#000">133</div>
<div class="hc" style="left:791px;top:305px;color:#000">85</div>
<div class="sm" style="left:123px;top:309px;border-color:#000"></div>
<div class="dc" style="left:437px;top:305px;color:#000">1</div>
<div class="hc" style="left:810px;top:305px;color:#000">O1</div>
<div class="tc" style="left:136px;top:305px;color:#000">˜</div>
<div class="dc" style="left:483px;top:305px;color:#000">152</div>
<div class="hc" style="left:848px;top:305px;color:#000">98</div>
<div class="tc" style="left:153px;top:305px;color:#000">T</div>
<div class="dc" style="left:506px;top:305px;color:#000">84</div>
<div class="hc" style="left:867px;top:305px;color:#000">54</div>
<div class="tc" style="left:170px;top:305px;color:#000">ÿ</div>
<div class="dc" style="left:529px;top:305px;color:#000">255</div>
<div class="hc" style="left:886px;top:305px;color:#000"><i>F</i><i>F</i></div>
<div class="sm" style="left:191px;top:309px;border-color:#000"></div>
<div class="dc" style="left:552px;top:305px;color:#000">28</div>
<div class="hc" style="left:905px;top:305px;color:#000">1<i>C</i></div>
<div class="tc" style="left:204px;top:305px;color:#000">L</div>
<div class="dc" style="left:575px;top:305px;color:#000">76</div>
<div class="hc" style="left:924px;top:305px;color:#000">4<i>C</i></div>
<div class="tc" style="left:221px;top:305px;color:#000">R</div>
<div class="dc" style="left:598px;top:305px;color:#000">82</div>
<div class="hc" style="left:943px;top:305px;color:#000">52</div>
<div class="tc" style="left:238px;top:305px;color:#000">ç</div>
<div class="dc" style="left:621px;top:305px;color:#000">231</div>
<div class="hc" style="left:962px;top:305px;color:#000"><i>E</i>7</div>
<div class="sm" style="left:259px;top:309px;border-color:#000"></div>
<div class="dc" style="left:644px;top:305px;color:#000">3</div>
<div class="hc" style="left:981px;top:305px;color:#000">O3</div>
<div class="sm" style="left:4px;top:334px;border-color:#000"></div>
<div class="dc" style="left:276px;top:330px;color:#000">141</div>
<div class="hc" style="left:677px;top:330px;color:#000">8<i>D</i></div>
<div class="tc" style="left:17px;top:330px;color:#000">‚</div>
<div class="dc" style="left:299px;top:330px;color:#000">13O</div>
<div class="hc" style="left:696px;top:330px;color:#000">82</div>
<div class="tc" style="left:34px;top:330px;color:#000">ä</div>
<div class="dc" style="left:322px;top:330px;color:#000">228</div>
<div class="hc" style="left:715px;top:330px;color:#000"><i>E</i>4</div>
<div class="tc" style="left:51px;top:330px;color:#000">.</div>
<div class="dc" style="left:345px;top:330px;color:#000">46</div>
<div class="hc" style="left:734px;top:330px;color:#000">2<i>E</i></div>
<div class="tc" style="left:68px;top:330px;color:#000">ò</div>
<div class="dc" style="left:368px;top:330px;color:#000">242</div>
<div class="hc" style="left:753px;top:330px;color:#000"><i>F</i>2</div>
<div class="sm" style="left:89px;top:334px;border-color:#000"></div>
<div class="dc" style="left:391px;top:330px;color:#000">129</div>
<div class="hc" style="left:772px;top:330px;color:#000">81</div>
<div class="tc" style="left:102px;top:330px;color:#000">Ñ</div>
<div class="dc" style="left:414px;top:330px;color:#000">2O9</div>
<div class="hc" style="left:791px;top:330px;color:#000"><i>D</i>1</div>
<div class="tc" style="left:119px;top:330px;color:#000">]</div>
<div class="dc" style="left:437px;top:330px;color:#000">93</div>
<div class="hc" style="left:810px;top:330px;color:#000">5<i>D</i></div>
<div class="sm" style="left:140px;top:334px;border-color:#000"></div>
<div class="dc" style="left:483px;top:330px;color:#000">129</div>
<div class="hc" style="left:848px;top:330px;color:#000">81</div>
<div class="sm" style="left:157px;top:334px;border-color:#000"></div>
<div class="dc" style="left:506px;top:330px;color:#000">28</div>
<div class="hc" style="left:867px;top:330px;color:#000">1<i>C</i></div>
<div class="tc" style="left:170px;top:330px;color:#000">d</div>
<div class="dc" style="left:529px;top:330px;color:#000">1OO</div>
<div class="hc" style="left:886px;top:330px;color:#000">64</div>
<div class="sm" style="left:191px;top:334px;border-color:#000"></div>
<div class="dc" style="left:552px;top:330px;color:#000">4</div>
<div class="hc" style="left:905px;top:330px;color:#000">O4</div>
<div class="tc" style="left:204px;top:330px;color:#000">‹</div>
<div class="dc" style="left:575px;top:330px;color:#000">139</div>
<div class="hc" style="left:924px;top:330px;color:#000">8<i>B</i></div>
<div class="sm" style="left:225px;top:334px;border-color:#000"></div>
<div class="dc" style="left:598px;top:330px;color:#000">27</div>
<div class="hc" style="left:943px;top:330px;color:#000">1<i>B</i></div>
<div class="tc" style="left:238px;top:330px;color:#000">€</div>
<div class="dc" style="left:621px;top:330px;color:#000">128</div>
<div class="hc" style="left:962px;top:330px;color:#000">8O</div>
<div class="tc" style="left:255px;top:330px;color:#000">&lt;</div>
<div class="dc" style="left:644px;top:330px;color:#000">6O</div>
<div class="hc" style="left:981px;top:330px;color:#000">3<i>C</i></div>
<div class="dc" style="left:276px;top:355px;color:#000">16O</div>
<div class="hc" style="left:677px;top:355px;color:#000"><i>A</i>O</div>
<div class="tc" style="left:17px;top:355px;color:#000">á</div>
<div class="dc" style="left:299px;top:355px;color:#000">225</div>
<div class="hc" style="left:696px;top:355px;color:#000"><i>E</i>1</div>
<div class="tc" style="left:34px;top:355px;color:#000">ˆ</div>
<div class="dc" style="left:322px;top:355px;color:#000">136</div>
<div class="hc" style="left:715px;top:355px;color:#000">88</div>
<div class="tc" style="left:51px;top:355px;color:#000">.</div>
<div class="dc" style="left:345px;top:355px;color:#000">46</div>
<div class="hc" style="left:734px;top:355px;color:#000">2<i>E</i></div>
<div class="tc" style="left:68px;top:355px;color:#000">#</div>
<div class="dc" style="left:368px;top:355px;color:#000">35</div>
<div class="hc" style="left:753px;top:355px;color:#000">23</div>
<div class="tc" style="left:85px;top:355px;color:#000">Ø</div>
<div class="dc" style="left:391px;top:355px;color:#000">216</div>
<div class="hc" style="left:772px;top:355px;color:#000"><i>D</i>8</div>
<div class="tc" style="left:102px;top:355px;color:#000">û</div>
<div class="dc" style="left:414px;top:355px;color:#000">251</div>
<div class="hc" style="left:791px;top:355px;color:#000"><i>F</i><i>B</i></div>
<div class="tc" style="left:119px;top:355px;color:#000">{</div>
<div class="dc" style="left:437px;top:355px;color:#000">123</div>
<div class="hc" style="left:810px;top:355px;color:#000">7<i>B</i></div>
<div class="tc" style="left:136px;top:355px;color:#000">L</div>
<div class="dc" style="left:483px;top:355px;color:#000">76</div>
<div class="hc" style="left:848px;top:355px;color:#000">4<i>C</i></div>
<div class="tc" style="left:153px;top:355px;color:#000">«</div>
<div class="dc" style="left:506px;top:355px;color:#000">171</div>
<div class="hc" style="left:867px;top:355px;color:#000"><i>A</i><i>B</i></div>
<div class="tc" style="left:170px;top:355px;color:#000">&lt;</div>
<div class="dc" style="left:529px;top:355px;color:#000">6O</div>
<div class="hc" style="left:886px;top:355px;color:#000">3<i>C</i></div>
<div class="dc" style="left:552px;top:355px;color:#000">16O</div>
<div class="hc" style="left:905px;top:355px;color:#000"><i>A</i>O</div>
<div class="sm" style="left:208px;top:359px;border-color:#000"></div>
<div class="dc" style="left:575px;top:355px;color:#000">17</div>
<div class="hc" style="left:924px;top:355px;color:#000">11</div>
<div class="tc" style="left:221px;top:355px;color:#000">h</div>
<div class="dc" style="left:598px;top:355px;color:#000">1O4</div>
<div class="hc" style="left:943px;top:355px;color:#000">68</div>
<div class="tc" style="left:238px;top:355px;color:#000">ý</div>
<div class="dc" style="left:621px;top:355px;color:#000">253</div>
<div class="hc" style="left:962px;top:355px;color:#000"><i>F</i><i>D</i></div>
<div class="tc" style="left:255px;top:355px;color:#000">ó</div>
<div class="dc" style="left:644px;top:355px;color:#000">243</div>
<div class="hc" style="left:981px;top:355px;color:#000"><i>F</i>3</div>
<div class="tc" style="left:0px;top:380px;color:#000">¦</div>
<div class="dc" style="left:276px;top:380px;color:#000">166</div>
<div class="hc" style="left:677px;top:380px;color:#000"><i>A</i>6</div>
<div class="tc" style="left:17px;top:380px;color:#000">Þ</div>
<div class="dc" style="left:299px;top:380px;color:#000">222</div>
<div class="hc" style="left:696px;top:380px;color:#000"><i>D</i><i>E</i></div>
<div class="sm" style="left:38px;top:384px;border-color:#000"></div>
<div class="dc" style="left:322px;top:380px;color:#000">27</div>
<div class="hc" style="left:715px;top:380px;color:#000">1<i>B</i></div>
<div class="tc" style="left:51px;top:380px;color:#000">ì</div>
<div class="dc" style="left:345px;top:380px;color:#000">236</div>
<div class="hc" style="left:734px;top:380px;color:#000"><i>E</i><i>C</i></div>
<div class="tc" style="left:68px;top:380px;color:#000">ü</div>
<div class="dc" style="left:368px;top:380px;color:#000">252</div>
<div class="hc" style="left:753px;top:380px;color:#000"><i>F</i><i>C</i></div>
<div class="tc" style="left:85px;top:380px;color:#000">#</div>
<div class="dc" style="left:391px;top:380px;color:#000">35</div>
<div class="hc" style="left:772px;top:380px;color:#000">23</div>
<div class="tc" style="left:102px;top:380px;color:#000">è</div>
<div class="dc" style="left:414px;top:380px;color:#000">232</div>
<div class="hc" style="left:791px;top:380px;color:#000"><i>E</i>8</div>
<div class="tc" style="left:119px;top:380px;color:#000">Q</div>
<div class="dc" style="left:437px;top:380px;color:#000">81</div>
<div class="hc" style="left:810px;top:380px;color:#000">51</div>
<div class="sm" style="left:140px;top:384px;border-color:#000"></div>
<div class="dc" style="left:483px;top:380px;color:#000">3O</div>
<div class="hc" style="left:848px;top:380px;color:#000">1<i>E</i></div>
<div class="tc" style="left:153px;top:380px;color:#000">O</div>
<div class="dc" style="left:506px;top:380px;color:#000">48</div>
<div class="hc" style="left:867px;top:380px;color:#000">3O</div>
<div class="tc" style="left:170px;top:380px;color:#000">ê</div>
<div class="dc" style="left:529px;top:380px;color:#000">234</div>
<div class="hc" style="left:886px;top:380px;color:#000"><i>E</i><i>A</i></div>
<div class="tc" style="left:187px;top:380px;color:#000">œ</div>
<div class="dc" style="left:552px;top:380px;color:#000">156</div>
<div class="hc" style="left:905px;top:380px;color:#000">9<i>C</i></div>
<div class="tc" style="left:204px;top:380px;color:#000">n</div>
<div class="dc" style="left:575px;top:380px;color:#000">11O</div>
<div class="hc" style="left:924px;top:380px;color:#000">6<i>E</i></div>
<div class="tc" style="left:221px;top:380px;color:#000">²</div>
<div class="dc" style="left:598px;top:380px;color:#000">178</div>
<div class="hc" style="left:943px;top:380px;color:#000"><i>B</i>2</div>
<div class="tc" style="left:238px;top:380px;color:#000">ü</div>
<div class="dc" style="left:621px;top:380px;color:#000">252</div>
<div class="hc" style="left:962px;top:380px;color:#000"><i>F</i><i>C</i></div>
<div class="tc" style="left:255px;top:380px;color:#000">Ñ</div>
<div class="dc" style="left:644px;top:380px;color:#000">2O9</div>
<div class="hc" style="left:981px;top:380px;color:#000"><i>D</i>1</div>
<div class="tc" style="left:0px;top:405px;color:#000">û</div>
<div class="dc" style="left:276px;top:405px;color:#000">251</div>
<div class="hc" style="left:677px;top:405px;color:#000"><i>F</i><i>B</i></div>
<div class="tc" style="left:17px;top:405px;color:#000">3</div>
<div class="dc" style="left:299px;top:405px;color:#000">51</div>
<div class="hc" style="left:696px;top:405px;color:#000">33</div>
<div class="tc" style="left:34px;top:405px;color:#000">˜</div>
<div class="dc" style="left:322px;top:405px;color:#000">152</div>
<div class="hc" style="left:715px;top:405px;color:#000">98</div>
<div class="tc" style="left:51px;top:405px;color:#000">¤</div>
<div class="dc" style="left:345px;top:405px;color:#000">164</div>
<div class="hc" style="left:734px;top:405px;color:#000"><i>A</i>4</div>
<div class="tc" style="left:68px;top:405px;color:#000">¢</div>
<div class="dc" style="left:368px;top:405px;color:#000">162</div>
<div class="hc" style="left:753px;top:405px;color:#000"><i>A</i>2</div>
<div class="sm" style="left:89px;top:409px;border-color:#000"></div>
<div class="dc" style="left:391px;top:405px;color:#000">9</div>
<div class="hc" style="left:772px;top:405px;color:#000">O9</div>
<div class="tc" style="left:102px;top:405px;color:#000">k</div>
<div class="dc" style="left:414px;top:405px;color:#000">1O7</div>
<div class="hc" style="left:791px;top:405px;color:#000">6<i>B</i></div>
<div class="sm" style="left:123px;top:409px;border-color:#000"></div>
<div class="dc" style="left:437px;top:405px;color:#000">144</div>
<div class="hc" style="left:810px;top:405px;color:#000">9O</div>
<div class="tc" style="left:136px;top:405px;color:#000">r</div>
<div class="dc" style="left:483px;top:405px;color:#000">114</div>
<div class="hc" style="left:848px;top:405px;color:#000">72</div>
<div class="sm" style="left:157px;top:409px;border-color:#000"></div>
<div class="dc" style="left:506px;top:405px;color:#000">127</div>
<div class="hc" style="left:867px;top:405px;color:#000">7<i>F</i></div>
<div class="tc" style="left:170px;top:405px;color:#000">Ð</div>
<div class="dc" style="left:529px;top:405px;color:#000">2O8</div>
<div class="hc" style="left:886px;top:405px;color:#000"><i>D</i>O</div>
<div class="tc" style="left:187px;top:405px;color:#000">˜</div>
<div class="dc" style="left:552px;top:405px;color:#000">152</div>
<div class="hc" style="left:905px;top:405px;color:#000">98</div>
<div class="tc" style="left:204px;top:405px;color:#000">Ð</div>
<div class="dc" style="left:575px;top:405px;color:#000">2O8</div>
<div class="hc" style="left:924px;top:405px;color:#000"><i>D</i>O</div>
<div class="tc" style="left:221px;top:405px;color:#000">„</div>
<div class="dc" style="left:598px;top:405px;color:#000">132</div>
<div class="hc" style="left:943px;top:405px;color:#000">84</div>
<div class="tc" style="left:238px;top:405px;color:#000">w</div>
<div class="dc" style="left:621px;top:405px;color:#000">119</div>
<div class="hc" style="left:962px;top:405px;color:#000">77</div>
<div class="tc" style="left:255px;top:405px;color:#000">L</div>
<div class="dc" style="left:644px;top:405px;color:#000">76</div>
<div class="hc" style="left:981px;top:405px;color:#000">4<i>C</i></div>
<div class="tc" style="left:0px;top:430px;color:#000">ë</div>
<div class="dc" style="left:276px;top:430px;color:#000">235</div>
<div class="hc" style="left:677px;top:430px;color:#000"><i>E</i><i>B</i></div>
<div class="tc" style="left:17px;top:430px;color:#000">-</div>
<div class="dc" style="left:299px;top:430px;color:#000">173</div>
<div class="hc" style="left:696px;top:430px;color:#000"><i>A</i><i>D</i></div>
<div class="tc" style="left:34px;top:430px;color:#000">Y</div>
<div class="dc" style="left:322px;top:430px;color:#000">89</div>
<div class="hc" style="left:715px;top:430px;color:#000">59</div>
<div class="tc" style="left:51px;top:430px;color:#000">1</div>
<div class="dc" style="left:345px;top:430px;color:#000">49</div>
<div class="hc" style="left:734px;top:430px;color:#000">31</div>
<div class="sm" style="left:72px;top:434px;border-color:#000"></div>
<div class="dc" style="left:368px;top:430px;color:#000">26</div>
<div class="hc" style="left:753px;top:430px;color:#000">1<i>A</i></div>
<div class="tc" style="left:85px;top:430px;color:#000">“</div>
<div class="dc" style="left:391px;top:430px;color:#000">147</div>
<div class="hc" style="left:772px;top:430px;color:#000">93</div>
<div class="tc" style="left:102px;top:430px;color:#000">C</div>
<div class="dc" style="left:414px;top:430px;color:#000">67</div>
<div class="hc" style="left:791px;top:430px;color:#000">43</div>
<div class="tc" style="left:119px;top:430px;color:#000">&gt;</div>
<div class="dc" style="left:437px;top:430px;color:#000">62</div>
<div class="hc" style="left:810px;top:430px;color:#000">3<i>E</i></div>
<div class="tc" style="left:136px;top:430px;color:#000">Â</div>
<div class="dc" style="left:483px;top:430px;color:#000">194</div>
<div class="hc" style="left:848px;top:430px;color:#000"><i>C</i>2</div>
<div class="sm" style="left:157px;top:434px;border-color:#000"></div>
<div class="dc" style="left:506px;top:430px;color:#000">27</div>
<div class="hc" style="left:867px;top:430px;color:#000">1<i>B</i></div>
<div class="tc" style="left:170px;top:430px;color:#000">É</div>
<div class="dc" style="left:529px;top:430px;color:#000">2O1</div>
<div class="hc" style="left:886px;top:430px;color:#000"><i>C</i>9</div>
<div class="tc" style="left:187px;top:430px;color:#000">Í</div>
<div class="dc" style="left:552px;top:430px;color:#000">2O5</div>
<div class="hc" style="left:905px;top:430px;color:#000"><i>C</i><i>D</i></div>
<div class="tc" style="left:204px;top:430px;color:#000">w</div>
<div class="dc" style="left:575px;top:430px;color:#000">119</div>
<div class="hc" style="left:924px;top:430px;color:#000">77</div>
<div class="tc" style="left:221px;top:430px;color:#000">Î</div>
<div class="dc" style="left:598px;top:430px;color:#000">2O6</div>
<div class="hc" style="left:943px;top:430px;color:#000"><i>C</i><i>E</i></div>
<div class="tc" style="left:238px;top:430px;color:#000">G</div>
<div class="dc" style="left:621px;top:430px;color:#000">71</div>
<div class="hc" style="left:962px;top:430px;color:#000">47</div>
<div class="sm" style="left:259px;top:434px;border-color:#000"></div>
<div class="dc" style="left:644px;top:430px;color:#000">129</div>
<div class="hc" style="left:981px;top:430px;color:#000">81</div>
<div class="tc" style="left:0px;top:455px;color:#000">Q</div>
<div class="dc" style="left:276px;top:455px;color:#000">81</div>
<div class="hc" style="left:677px;top:455px;color:#000">51</div>
<div class="tc" style="left:17px;top:455px;color:#000">g</div>
<div class="dc" style="left:299px;top:455px;color:#000">1O3</div>
<div class="hc" style="left:696px;top:455px;color:#000">67</div>
<div class="tc" style="left:34px;top:455px;color:#000">4</div>
<div class="dc" style="left:322px;top:455px;color:#000">52</div>
<div class="hc" style="left:715px;top:455px;color:#000">34</div>
<div class="tc" style="left:51px;top:455px;color:#000">a</div>
<div class="dc" style="left:345px;top:455px;color:#000">97</div>
<div class="hc" style="left:734px;top:455px;color:#000">61</div>
<div class="sm" style="left:72px;top:459px;border-color:#000"></div>
<div class="dc" style="left:368px;top:455px;color:#000">141</div>
<div class="hc" style="left:753px;top:455px;color:#000">8<i>D</i></div>
<div class="tc" style="left:85px;top:455px;color:#000">é</div>
<div class="dc" style="left:391px;top:455px;color:#000">233</div>
<div class="hc" style="left:772px;top:455px;color:#000"><i>E</i>9</div>
<div class="tc" style="left:102px;top:455px;color:#000">ñ</div>
<div class="dc" style="left:414px;top:455px;color:#000">241</div>
<div class="hc" style="left:791px;top:455px;color:#000"><i>F</i>1</div>
<div class="tc" style="left:119px;top:455px;color:#000">¯</div>
<div class="dc" style="left:437px;top:455px;color:#000">175</div>
<div class="hc" style="left:810px;top:455px;color:#000"><i>A</i><i>F</i></div>
<div class="tc" style="left:136px;top:455px;color:#000">;</div>
<div class="dc" style="left:483px;top:455px;color:#000">59</div>
<div class="hc" style="left:848px;top:455px;color:#000">3<i>B</i></div>
<div class="tc" style="left:153px;top:455px;color:#000">ƒ</div>
<div class="dc" style="left:506px;top:455px;color:#000">131</div>
<div class="hc" style="left:867px;top:455px;color:#000">83</div>
<div class="tc" style="left:170px;top:455px;color:#000">@</div>
<div class="dc" style="left:529px;top:455px;color:#000">64</div>
<div class="hc" style="left:886px;top:455px;color:#000">4O</div>
<div class="tc" style="left:187px;top:455px;color:#000">C</div>
<div class="dc" style="left:552px;top:455px;color:#000">67</div>
<div class="hc" style="left:905px;top:455px;color:#000">43</div>
<div class="tc" style="left:204px;top:455px;color:#000">é</div>
<div class="dc" style="left:575px;top:455px;color:#000">233</div>
<div class="hc" style="left:924px;top:455px;color:#000"><i>E</i>9</div>
<div class="tc" style="left:221px;top:455px;color:#000">‹</div>
<div class="dc" style="left:598px;top:455px;color:#000">139</div>
<div class="hc" style="left:943px;top:455px;color:#000">8<i>B</i></div>
<div class="tc" style="left:238px;top:455px;color:#000">;</div>
<div class="dc" style="left:621px;top:455px;color:#000">59</div>
<div class="hc" style="left:962px;top:455px;color:#000">3<i>B</i></div>
<div class="tc" style="left:255px;top:455px;color:#000">Ú</div>
<div class="dc" style="left:644px;top:455px;color:#000">218</div>
<div class="hc" style="left:981px;top:455px;color:#000"><i>D</i><i>A</i></div>
<div class="tc" style="left:0px;top:480px;color:#000">r</div>
<div class="dc" style="left:276px;top:480px;color:#000">114</div>
<div class="hc" style="left:677px;top:480px;color:#000">72</div>
<div class="tc" style="left:17px;top:480px;color:#000">µ</div>
<div class="dc" style="left:299px;top:480px;color:#000">181</div>
<div class="hc" style="left:696px;top:480px;color:#000"><i>B</i>5</div>
<div class="tc" style="left:34px;top:480px;color:#000">õ</div>
<div class="dc" style="left:322px;top:480px;color:#000">245</div>
<div class="hc" style="left:715px;top:480px;color:#000"><i>F</i>5</div>
<div class="tc" style="left:51px;top:480px;color:#000">³</div>
<div class="dc" style="left:345px;top:480px;color:#000">179</div>
<div class="hc" style="left:734px;top:480px;color:#000"><i>B</i>3</div>
<div class="tc" style="left:68px;top:480px;color:#000">Ñ</div>
<div class="dc" style="left:368px;top:480px;color:#000">2O9</div>
<div class="hc" style="left:753px;top:480px;color:#000"><i>D</i>1</div>
<div class="tc" style="left:85px;top:480px;color:#000">`</div>
<div class="dc" style="left:391px;top:480px;color:#000">96</div>
<div class="hc" style="left:772px;top:480px;color:#000">6O</div>
<div class="tc" style="left:102px;top:480px;color:#000">ï</div>
<div class="dc" style="left:414px;top:480px;color:#000">239</div>
<div class="hc" style="left:791px;top:480px;color:#000"><i>E</i><i>F</i></div>
<div class="sm" style="left:123px;top:484px;border-color:#000"></div>
<div class="dc" style="left:437px;top:480px;color:#000">22</div>
<div class="hc" style="left:810px;top:480px;color:#000">16</div>
<div class="tc" style="left:136px;top:480px;color:#000">´</div>
<div class="dc" style="left:483px;top:480px;color:#000">18O</div>
<div class="hc" style="left:848px;top:480px;color:#000"><i>B</i>4</div>
<div class="tc" style="left:153px;top:480px;color:#000">å</div>
<div class="dc" style="left:506px;top:480px;color:#000">229</div>
<div class="hc" style="left:867px;top:480px;color:#000"><i>E</i>5</div>
<div class="tc" style="left:170px;top:480px;color:#000">+</div>
<div class="dc" style="left:529px;top:480px;color:#000">43</div>
<div class="hc" style="left:886px;top:480px;color:#000">2<i>B</i></div>
<div class="tc" style="left:187px;top:480px;color:#000">¦</div>
<div class="dc" style="left:552px;top:480px;color:#000">166</div>
<div class="hc" style="left:905px;top:480px;color:#000"><i>A</i>6</div>
<div class="tc" style="left:204px;top:480px;color:#000">§</div>
<div class="dc" style="left:575px;top:480px;color:#000">167</div>
<div class="hc" style="left:924px;top:480px;color:#000"><i>A</i>7</div>
<div class="tc" style="left:221px;top:480px;color:#000">C</div>
<div class="dc" style="left:598px;top:480px;color:#000">67</div>
<div class="hc" style="left:943px;top:480px;color:#000">43</div>
<div class="tc" style="left:238px;top:480px;color:#000">n</div>
<div class="dc" style="left:621px;top:480px;color:#000">11O</div>
<div class="hc" style="left:962px;top:480px;color:#000">6<i>E</i></div>
<div class="tc" style="left:255px;top:480px;color:#000">ï</div>
<div class="dc" style="left:644px;top:480px;color:#000">239</div>
<div class="hc" style="left:981px;top:480px;color:#000"><i>E</i><i>F</i></div>
<div class="sm" style="left:4px;top:509px;border-color:#000"></div>
<div class="dc" style="left:276px;top:505px;color:#000">6</div>
<div class="hc" style="left:677px;top:505px;color:#000">O6</div>
<div class="tc" style="left:17px;top:505px;color:#000">“</div>
<div class="dc" style="left:299px;top:505px;color:#000">147</div>
<div class="hc" style="left:696px;top:505px;color:#000">93</div>
<div class="tc" style="left:34px;top:505px;color:#000">Ô</div>
<div class="dc" style="left:322px;top:505px;color:#000">212</div>
<div class="hc" style="left:715px;top:505px;color:#000"><i>D</i>4</div>
<div class="tc" style="left:51px;top:505px;color:#000">D</div>
<div class="dc" style="left:345px;top:505px;color:#000">68</div>
<div class="hc" style="left:734px;top:505px;color:#000">44</div>
<div class="tc" style="left:68px;top:505px;color:#000">·</div>
<div class="dc" style="left:368px;top:505px;color:#000">183</div>
<div class="hc" style="left:753px;top:505px;color:#000"><i>B</i>7</div>
<div class="dc" style="left:391px;top:505px;color:#000">16O</div>
<div class="hc" style="left:772px;top:505px;color:#000"><i>A</i>O</div>
<div class="tc" style="left:102px;top:505px;color:#000">÷</div>
<div class="dc" style="left:414px;top:505px;color:#000">247</div>
<div class="hc" style="left:791px;top:505px;color:#000"><i>F</i>7</div>
<div class="tc" style="left:119px;top:505px;color:#000">·</div>
<div class="dc" style="left:437px;top:505px;color:#000">183</div>
<div class="hc" style="left:810px;top:505px;color:#000"><i>B</i>7</div>
<div class="tc" style="left:136px;top:505px;color:#000">$</div>
<div class="dc" style="left:483px;top:505px;color:#000">36</div>
<div class="hc" style="left:848px;top:505px;color:#000">24</div>
<div class="tc" style="left:153px;top:505px;color:#000">w</div>
<div class="dc" style="left:506px;top:505px;color:#000">119</div>
<div class="hc" style="left:867px;top:505px;color:#000">77</div>
<div class="tc" style="left:170px;top:505px;color:#000">9</div>
<div class="dc" style="left:529px;top:505px;color:#000">57</div>
<div class="hc" style="left:886px;top:505px;color:#000">39</div>
<div class="sm" style="left:191px;top:509px;border-color:#000"></div>
<div class="dc" style="left:552px;top:505px;color:#000">8</div>
<div class="hc" style="left:905px;top:505px;color:#000">O8</div>
<div class="tc" style="left:204px;top:505px;color:#000">Ú</div>
<div class="dc" style="left:575px;top:505px;color:#000">218</div>
<div class="hc" style="left:924px;top:505px;color:#000"><i>D</i><i>A</i></div>
<div class="tc" style="left:221px;top:505px;color:#000">€</div>
<div class="dc" style="left:598px;top:505px;color:#000">128</div>
<div class="hc" style="left:943px;top:505px;color:#000">8O</div>
<div class="tc" style="left:238px;top:505px;color:#000">Q</div>
<div class="dc" style="left:621px;top:505px;color:#000">81</div>
<div class="hc" style="left:962px;top:505px;color:#000">51</div>
<div class="tc" style="left:255px;top:505px;color:#000">Ï</div>
<div class="dc" style="left:644px;top:505px;color:#000">2O7</div>
<div class="hc" style="left:981px;top:505px;color:#000"><i>C</i><i>F</i></div>
<div class="tc" style="left:0px;top:530px;color:#000">O</div>
<div class="dc" style="left:276px;top:530px;color:#000">48</div>
<div class="hc" style="left:677px;top:530px;color:#000">3O</div>
<div class="tc" style="left:17px;top:530px;color:#000">©</div>
<div class="dc" style="left:299px;top:530px;color:#000">169</div>
<div class="hc" style="left:696px;top:530px;color:#000"><i>A</i>9</div>
<div class="tc" style="left:34px;top:530px;color:#000">¾</div>
<div class="dc" style="left:322px;top:530px;color:#000">19O</div>
<div class="hc" style="left:715px;top:530px;color:#000"><i>B</i><i>E</i></div>
<div class="tc" style="left:51px;top:530px;color:#000">R</div>
<div class="dc" style="left:345px;top:530px;color:#000">82</div>
<div class="hc" style="left:734px;top:530px;color:#000">52</div>
<div class="tc" style="left:68px;top:530px;color:#000">§</div>
<div class="dc" style="left:368px;top:530px;color:#000">167</div>
<div class="hc" style="left:753px;top:530px;color:#000"><i>A</i>7</div>
<div class="tc" style="left:85px;top:530px;color:#000">D</div>
<div class="dc" style="left:391px;top:530px;color:#000">68</div>
<div class="hc" style="left:772px;top:530px;color:#000">44</div>
<div class="tc" style="left:102px;top:530px;color:#000">w</div>
<div class="dc" style="left:414px;top:530px;color:#000">119</div>
<div class="hc" style="left:791px;top:530px;color:#000">77</div>
<div class="tc" style="left:119px;top:530px;color:#000">M</div>
<div class="dc" style="left:437px;top:530px;color:#000">77</div>
<div class="hc" style="left:810px;top:530px;color:#000">4<i>D</i></div>
<div class="tc" style="left:136px;top:530px;color:#000">Ò</div>
<div class="dc" style="left:483px;top:530px;color:#000">21O</div>
<div class="hc" style="left:848px;top:530px;color:#000"><i>D</i>2</div>
<div class="tc" style="left:153px;top:530px;color:#000">s</div>
<div class="dc" style="left:506px;top:530px;color:#000">115</div>
<div class="hc" style="left:867px;top:530px;color:#000">73</div>
<div class="sm" style="left:174px;top:534px;border-color:#000"></div>
<div class="dc" style="left:529px;top:530px;color:#000">16</div>
<div class="hc" style="left:886px;top:530px;color:#000">1O</div>
<div class="sm" style="left:191px;top:534px;border-color:#000"></div>
<div class="dc" style="left:552px;top:530px;color:#000">25</div>
<div class="hc" style="left:905px;top:530px;color:#000">19</div>
<div class="sm" style="left:208px;top:534px;border-color:#000"></div>
<div class="dc" style="left:575px;top:530px;color:#000">5</div>
<div class="hc" style="left:924px;top:530px;color:#000">O5</div>
<div class="tc" style="left:221px;top:530px;color:#000">}</div>
<div class="dc" style="left:598px;top:530px;color:#000">125</div>
<div class="hc" style="left:943px;top:530px;color:#000">7<i>D</i></div>
<div class="tc" style="left:238px;top:530px;color:#000">Ç</div>
<div class="dc" style="left:621px;top:530px;color:#000">199</div>
<div class="hc" style="left:962px;top:530px;color:#000"><i>C</i>7</div>
<div class="tc" style="left:255px;top:530px;color:#000">&#x27;</div>
<div class="dc" style="left:644px;top:530px;color:#000">39</div>
<div class="hc" style="left:981px;top:530px;color:#000">27</div>
<div class="tc" style="left:0px;top:555px;color:#000">£</div>
<div class="dc" style="left:276px;top:555px;color:#000">163</div>
<div class="hc" style="left:677px;top:555px;color:#000"><i>A</i>3</div>
<div class="sm" style="left:21px;top:559px;border-color:#000"></div>
<div class="dc" style="left:299px;top:555px;color:#000">1</div>
<div class="hc" style="left:696px;top:555px;color:#000">O1</div>
<div class="tc" style="left:34px;top:555px;color:#000">5</div>
<div class="dc" style="left:322px;top:555px;color:#000">53</div>
<div class="hc" style="left:715px;top:555px;color:#000">35</div>
<div class="tc" style="left:51px;top:555px;color:#000">å</div>
<div class="dc" style="left:345px;top:555px;color:#000">229</div>
<div class="hc" style="left:734px;top:555px;color:#000"><i>E</i>5</div>
<div class="tc" style="left:68px;top:555px;color:#000">)</div>
<div class="dc" style="left:368px;top:555px;color:#000">41</div>
<div class="hc" style="left:753px;top:555px;color:#000">29</div>
<div class="tc" style="left:85px;top:555px;color:#000">w</div>
<div class="dc" style="left:391px;top:555px;color:#000">119</div>
<div class="hc" style="left:772px;top:555px;color:#000">77</div>
<div class="sm" style="left:106px;top:559px;border-color:#000"></div>
<div class="dc" style="left:414px;top:555px;color:#000">27</div>
<div class="hc" style="left:791px;top:555px;color:#000">1<i>B</i></div>
<div class="tc" style="left:119px;top:555px;color:#000">r</div>
<div class="dc" style="left:437px;top:555px;color:#000">114</div>
<div class="hc" style="left:810px;top:555px;color:#000">72</div>
<div class="big" style="left:137px;top:556px;border-color:#000"></div>
<div class="dc" style="left:483px;top:555px;color:#000">O</div>
<div class="hc" style="left:848px;top:555px;color:#000">OO</div>
<div class="big" style="left:154px;top:556px;border-color:#000"></div>
<div class="dc" style="left:506px;top:555px;color:#000">O</div>
<div class="hc" style="left:867px;top:555px;color:#000">OO</div>
<div class="big" style="left:171px;top:556px;border-color:#000"></div>
<div class="dc" style="left:529px;top:555px;color:#000">O</div>
<div class="hc" style="left:886px;top:555px;color:#000">OO</div>
<div class="big" style="left:188px;top:556px;border-color:#000"></div>
<div class="dc" style="left:552px;top:555px;color:#000">O</div>
<div class="hc" style="left:905px;top:555px;color:#000">OO</div>
<div class="tc" style="left:204px;top:555px;color:#000">I</div>
<div class="dc" style="left:575px;top:555px;color:#000">73</div>
<div class="hc" style="left:924px;top:555px;color:#000">49</div>
<div class="tc" style="left:221px;top:555px;color:#000">E</div>
<div class="dc" style="left:598px;top:555px;color:#000">69</div>
<div class="hc" style="left:943px;top:555px;color:#000">45</div>
<div class="tc" style="left:238px;top:555px;color:#000">N</div>
<div class="dc" style="left:621px;top:555px;color:#000">78</div>
<div class="hc" style="left:962px;top:555px;color:#000">4<i>E</i></div>
<div class="tc" style="left:255px;top:555px;color:#000">D</div>
<div class="dc" style="left:644px;top:555px;color:#000">68</div>
<div class="hc" style="left:981px;top:555px;color:#000">44</div>
<div class="tc" style="left:0px;top:580px;color:#000">®</div>
<div class="dc" style="left:276px;top:580px;color:#000">174</div>
<div class="hc" style="left:677px;top:580px;color:#000"><i>A</i><i>E</i></div>
<div class="tc" style="left:17px;top:580px;color:#000">B</div>
<div class="dc" style="left:299px;top:580px;color:#000">66</div>
<div class="hc" style="left:696px;top:580px;color:#000">42</div>
<div class="tc" style="left:34px;top:580px;color:#000">`</div>
<div class="dc" style="left:322px;top:580px;color:#000">96</div>
<div class="hc" style="left:715px;top:580px;color:#000">6O</div>
<div class="tc" style="left:51px;top:580px;color:#000">‚</div>
<div class="dc" style="left:345px;top:580px;color:#000">13O</div>
<div class="hc" style="left:734px;top:580px;color:#000">82</div>
<div style="left:69px;top:581px;width:3px;height:23px;background:#000"></div>
<div style="left:318px;top:429px;width:382px;height:260px;background:#d4d0c8;border:1px solid;border-color:#d4d0c8 #404040 #404040 #d4d0c8"></div>
<div style="left:319px;top:430px;width:380px;height:258px;border:1px solid;border-color:#fff #808080 #808080 #fff"></div>
<div style="left:321px;top:432px;width:376px;height:18px;background:linear-gradient(to right,#0a246a,#a6caf0)"></div>
<div style="left:322px;top:435px;font:bold 12px 'Liberation Sans';color:#fff;line-height:14px;white-space:pre">Replace...</div>
<div class="groove" style="left:321px;top:451px;width:376px"></div>
<div class="lbl" style="left:331px;top:460px">Search for:</div>
<div class="sunk" style="left:329px;top:475px;width:251px;height:23px"></div>
<div class="sunk" style="left:587px;top:475px;width:105px;height:23px"></div>
<div class="lbl" style="left:591px;top:480px">Text</div>
<div class="btn" style="left:674px;top:477px;width:16px;height:19px;box-shadow:inset -1px -1px 0 #404040,inset 1px 1px 0 #d4d0c8,inset -2px -2px 0 #808080,inset 2px 2px 0 #fff"></div>
<svg style="position:absolute;left:678px;top:484px" width="7" height="4"><path d="M0 0h7L3.5 4z" fill="#000"/></svg>
<div class="groove" style="left:321px;top:503px;width:376px"></div>
<div class="lbl" style="left:331px;top:510px">Replace by:</div>
<div class="sunk" style="left:329px;top:525px;width:251px;height:23px"></div>
<div class="sunk" style="left:587px;top:525px;width:105px;height:23px"></div>
<div class="lbl" style="left:591px;top:530px">Decimal</div>
<div class="btn" style="left:674px;top:527px;width:16px;height:19px;box-shadow:inset -1px -1px 0 #404040,inset 1px 1px 0 #d4d0c8,inset -2px -2px 0 #808080,inset 2px 2px 0 #fff"></div>
<svg style="position:absolute;left:678px;top:534px" width="7" height="4"><path d="M0 0h7L3.5 4z" fill="#000"/></svg>
<div class="groove" style="left:321px;top:553px;width:376px"></div>
<div class="lbl" style="left:336px;top:566px;letter-spacing:0.18px">0 times found</div>
<div class="lbl" style="left:336px;top:590px;letter-spacing:0.2px">0 replacements</div>
<div class="groove" style="left:321px;top:612px;width:376px"></div>
<div class="sunk" style="left:337px;top:628px;width:13px;height:13px"></div>
<div class="lbl" style="left:355px;top:627px;letter-spacing:0.16px">Replace within selection only</div>
<div class="btn" style="left:325px;top:651px;width:88px;height:28px"></div>
<div class="lbl" style="left:325px;top:658px;width:88px;text-align:center">Search Next</div>
<div class="btn" style="left:419px;top:651px;width:88px;height:28px"></div>
<div class="lbl" style="left:419px;top:658px;width:88px;text-align:center">Replace</div>
<div class="btn" style="left:513px;top:651px;width:88px;height:28px"></div>
<div class="lbl" style="left:513px;top:658px;width:88px;text-align:center">Replace All</div>
<div class="btn" style="left:605px;top:651px;width:88px;height:28px"></div>
<div class="lbl" style="left:605px;top:658px;width:88px;text-align:center">Close</div>
<div style="left:0;top:749px;width:1024px;height:19px;background:#d4d0c8"></div>
<div class="stp" style="left:0;width:45px">position</div>
<div class="stp" style="left:47px;width:93px;text-align:right">156</div>
<div class="stp" style="left:142px;width:93px;text-align:right">0x9C</div>
<div class="stp" style="left:237px;width:28px;padding-left:1px">OVR</div>
<div class="stp" style="left:267px;width:757px"></div>
<div style="left:0;top:767px;width:1024px;height:1px;background:#fff"></div>
</body></html>
